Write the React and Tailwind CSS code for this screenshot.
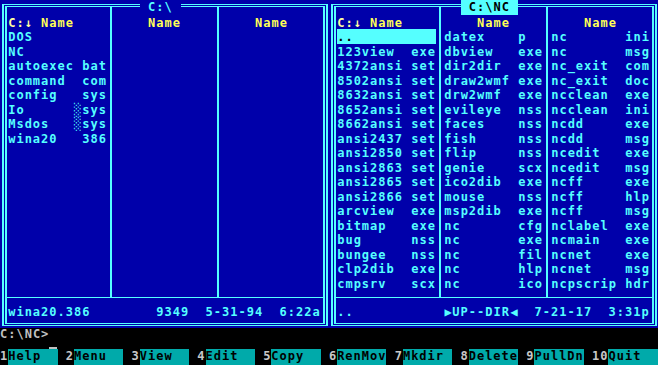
import React from "react";

const leftCols = [
  {
    header: "C:↓ Name",
    rows: [
      { n: "DOS" },
      { n: "NC" },
      { n: "autoexec", e: "bat" },
      { n: "command", e: "com" },
      { n: "config", e: "sys" },
      { n: "Io", e: "sys", h: true },
      { n: "Msdos", e: "sys", h: true },
      { n: "wina20", e: "386" },
    ],
  },
  { header: "Name", rows: [] },
  { header: "Name", rows: [] },
];

const rc1 = [
  ["..", ""], ["123view", "exe"], ["4372ansi", "set"], ["8502ansi", "set"], ["8632ansi", "set"],
  ["8652ansi", "set"], ["8662ansi", "set"], ["ansi2437", "set"], ["ansi2850", "set"], ["ansi2863", "set"],
  ["ansi2865", "set"], ["ansi2866", "set"], ["arcview", "exe"], ["bitmap", "exe"], ["bug", "nss"],
  ["bungee", "nss"], ["clp2dib", "exe"], ["cmpsrv", "scx"],
];
const rc2 = [
  ["datex", "p"], ["dbview", "exe"], ["dir2dir", "exe"], ["draw2wmf", "exe"], ["drw2wmf", "exe"],
  ["evileye", "nss"], ["faces", "nss"], ["fish", "nss"], ["flip", "nss"], ["genie", "scx"],
  ["ico2dib", "exe"], ["mouse", "nss"], ["msp2dib", "exe"], ["nc", "cfg"], ["nc", "exe"],
  ["nc", "fil"], ["nc", "hlp"], ["nc", "ico"],
];
const rc3 = [
  ["nc", "ini"], ["nc", "msg"], ["nc_exit", "com"], ["nc_exit", "doc"], ["ncclean", "exe"],
  ["ncclean", "ini"], ["ncdd", "exe"], ["ncdd", "msg"], ["ncedit", "exe"], ["ncedit", "msg"],
  ["ncff", "exe"], ["ncff", "hlp"], ["ncff", "msg"], ["nclabel", "exe"], ["ncmain", "exe"],
  ["ncnet", "exe"], ["ncnet", "msg"], ["ncpscrip", "hdr"],
];
const toRows = (arr) => arr.map(([n, e]) => ({ n, e }));

const rightCols = [
  { header: "C:↓ Name", rows: toRows(rc1), cursor: 0 },
  { header: "Name", rows: toRows(rc2) },
  { header: "Name", rows: toRows(rc3) },
];

function lineText(r) {
  if (!r.e) return r.n;
  if (r.h) return r.n.padEnd(8) + "░" + r.e;
  return r.n.padEnd(9) + r.e;
}

function Header({ text }) {
  if (text.startsWith("C:")) {
    return (
      <div className="h-[14.5px] leading-[17px] whitespace-pre">
        <span className="text-[#ffffa0]">C:↓</span>
        <span className="text-[#ffff55]"> Name</span>
      </div>
    );
  }
  return (
    <div className="h-[14.5px] w-[98.7px] leading-[17px] text-center text-[#ffff55]">{text}</div>
  );
}

function Column({ col, first }) {
  return (
    <div
      className={
        first
          ? "pl-[1.2px] pt-[7.5px]"
          : "border-l-2 border-[#55ffff] pl-[3.2px] pt-[7.5px]"
      }
    >
      <Header text={col.header} />
      {col.rows.map((r, i) => (
        <div
          key={i}
          className={
            col.cursor === i
              ? "h-[14.5px] w-[98.7px] leading-[17px] whitespace-pre bg-[#55ffff] text-black"
              : "h-[14.5px] w-[98.7px] leading-[17px] whitespace-pre text-[#55ffff]"
          }
        >
          {lineText(r)}
        </div>
      ))}
    </div>
  );
}

function Panel({ cols, status, title }) {
  return (
    <div className="relative w-[329px] h-[328px] bg-[#0000aa] pl-[2px] pt-[4px] pr-[1px] pb-[2px]">
      <div className="h-full border-x-2 border-y border-[#55ffff] p-px">
        <div className="h-full border-x-2 border-y border-[#55ffff] flex flex-col">
          <div className="h-[290px] grid grid-cols-[103px_107px_106px]">
            {cols.map((c, i) => (
              <Column key={i} col={c} first={i === 0} />
            ))}
          </div>
          <div className="flex-1 border-t border-[#55ffff] pt-[6.3px] pl-[1.2px]">
            <div className="h-[14.5px] leading-[17px] whitespace-pre text-[#55ffff] flex">{status}</div>
          </div>
        </div>
      </div>
      {title}
    </div>
  );
}

const keys = [
  ["1", "Help"], ["2", "Menu"], ["3", "View"], ["4", "Edit"], ["5", "Copy"],
  ["6", "RenMov"], ["7", "Mkdir"], ["8", "Delete"], ["9", "PullDn"],
];

const rightStatus = (
  <>
    <span className="whitespace-pre">{"..           "}</span>
    <span className="w-[8.225px] tracking-normal text-center">▶</span>
    <span className="whitespace-pre">UP--DIR</span>
    <span className="w-[8.225px] tracking-normal text-center">◀</span>
    <span className="whitespace-pre">{"  7-21-17  3:31p"}</span>
  </>
);

export default function App() {
  return (
    <div className="w-[658px] h-[365px] overflow-hidden bg-black flex flex-col font-['DejaVu_Sans_Mono',monospace] font-bold text-[12px] tracking-[1px]">
      <div className="flex h-[328px]">
        <Panel
          cols={leftCols}
          status={"wina20.386        9349  5-31-94  6:22a"}
          title={
            <div className="absolute top-0 left-[139.8px] h-[14.5px] leading-[14.5px] whitespace-pre bg-[#0000aa] text-[#55ffff]">
              {" C:\\ "}
            </div>
          }
        />
        <Panel
          cols={rightCols}
          status={rightStatus}
          title={
            <div className="absolute top-0 left-[131.6px] h-[15px] leading-[14.5px] whitespace-pre bg-[#55ffff] text-black">
              {" C:\\NC "}
            </div>
          }
        />
      </div>
      <div className="h-[21px] flex items-start text-[#c0c0c0] leading-[13px]">
        <span className="whitespace-pre">{"C:\\NC>"}</span>
        <span className="self-end w-[8px] h-[2px] bg-[#c0c0c0]" />
      </div>
      <div className="h-[16px] flex leading-[14.7px]">
        {keys.map(([k, l]) => (
          <div key={k} className="flex">
            <span className="w-[8.225px] text-[#c8c8c8]">{k}</span>
            <span className="w-[49.35px] bg-[#00aaaa] text-black">{l}</span>
            <span className="w-[8.225px]" />
          </div>
        ))}
        <span className="w-[16.45px] text-[#c8c8c8]">10</span>
        <span className="flex-1 bg-[#00aaaa] text-black">Quit</span>
      </div>
    </div>
  );
}
